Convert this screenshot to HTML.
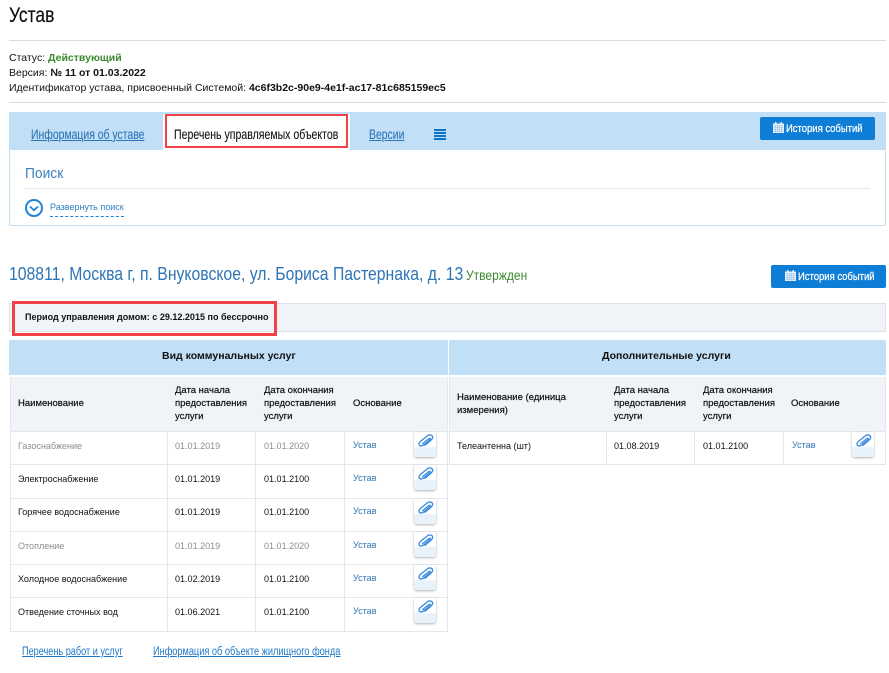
<!DOCTYPE html>
<html lang="ru">
<head>
<meta charset="utf-8">
<title>Устав</title>
<style>
html,body{margin:0;padding:0;background:#fff}
body{position:relative;width:889px;height:673px;overflow:hidden;font-family:"Liberation Sans",Arial,sans-serif;color:#111}
.a{position:absolute}
.t{position:absolute;white-space:nowrap;transform-origin:0 50%;line-height:14px;height:14px}
.b{position:absolute;background:#e3e7eb}
.s{font-size:9.5px;transform:scaleX(.95)}
.h{font-size:9.5px;color:#111;-webkit-text-stroke:.2px #111;line-height:13.2px;height:auto}
.g{color:#8c8c8c}
.l{color:#2f75b5}
.tab{font-size:14px;transform:scaleX(.745);-webkit-text-stroke:.1px currentColor}
.btn{position:absolute;width:115px;height:23px;background:#0d7dd6;border-radius:2px}
.clip{position:absolute;width:22px;height:25px;background:linear-gradient(#fff 58%,#e8f2fb 62%);border-radius:0 0 3px 3px;box-shadow:0 1px 2px rgba(0,0,0,.3)}
.clip svg{position:absolute;left:3px;top:1.500px}
</style>
</head>
<body>
<svg width="0" height="0" style="position:absolute"><defs>
<symbol id="pc" viewBox="0 0 17 14"><path d="M5.200 10 L11.800 4.600 C12.800 3.800 13.800 5 12.900 5.700 L7 10.800 C5 12.500 2 12.400 2 10 C2 8.900 2.700 8.100 3.500 7.400 L10.500 1.700 C12.500 .2 15.900 1 15.600 3.600 C15.500 4.800 14.600 5.700 13.600 6.500 L7.600 11.600" fill="none" stroke="#3a8ade" stroke-width="1.300"/></symbol>
<symbol id="cal" viewBox="0 0 11 11"><path fill="#eaf3fb" d="M0 1.500h2V0h1.500v1.500h4V0H9v1.500h2V11H0z"/><path stroke="#8dbfe8" stroke-width=".6" d="M.5 3.500h10M.5 5.500h10M.5 7.500h10M.5 9.500h10M2.500 3.500v7M4.500 3.500v7M6.500 3.500v7M8.500 3.500v7"/></symbol>
</defs></svg>

<div class="t" style="left:9px;top:5px;height:22px;line-height:22px;font-size:21px;color:#111;-webkit-text-stroke:.2px #111;transform:scaleX(.83)">Устав</div>
<div class="b" style="left:9px;top:40px;width:877px;height:1px;background:#d6dce2"></div>

<div class="t" style="left:9px;top:51px;font-size:10.5px">Статус: <b style="color:#3c8a2e">Действующий</b></div>
<div class="t" style="left:9px;top:66px;font-size:10.5px">Версия: <b>№ 11 от 01.03.2022</b></div>
<div class="t" style="left:9px;top:81px;font-size:10.5px">Идентификатор устава, присвоенный Системой: <b>4c6f3b2c-90e9-4e1f-ac17-81c685159ec5</b></div>
<div class="b" style="left:9px;top:102px;width:877px;height:1px;background:#d6dce2"></div>

<!-- Панель -->
<div class="a" style="left:9px;top:112px;width:875px;height:113px;border:1px solid #c1dff6;border-top:0;border-radius:0 0 2px 2px"></div>
<div class="a" style="left:9px;top:112px;width:877px;height:38px;background:#c1dff6"></div>
<div class="t tab" style="left:31px;top:127px;color:#2f75b5;text-decoration:underline">Информация об уставе</div>
<div class="a" style="left:163px;top:114px;width:187px;height:36px;background:#fff"></div>
<div class="a" style="left:165px;top:114px;width:179px;height:30px;background:#fff;border:2.500px solid #f04246"></div>
<div class="t tab" style="left:174px;top:127px;color:#111;transform:scaleX(.754)">Перечень управляемых объектов</div>
<div class="t tab" style="left:369px;top:127px;color:#2f75b5;text-decoration:underline">Версии</div>
<svg class="a" style="left:434px;top:129px" width="12" height="11"><path d="M0 1h12M0 4h12M0 7h12M0 10h12" stroke="#0d75c9" stroke-width="2"/></svg>

<div class="btn" style="left:760px;top:117px"></div>
<svg class="a" style="left:773px;top:122px" width="11" height="11"><use href="#cal"/></svg>
<div class="t" style="left:786px;top:122px;font-size:11px;color:#fff;-webkit-text-stroke:.25px #fff;transform:scaleX(.86)">История событий</div>

<div class="t" style="left:25px;top:166px;height:16px;line-height:16px;font-size:15px;color:#3b7fc0;transform:scaleX(.92)">Поиск</div>
<div class="b" style="left:25px;top:188px;width:845px;height:1px"></div>
<svg class="a" style="left:25px;top:199px" width="19" height="19"><circle cx="9" cy="9" r="8" fill="none" stroke="#1e83d8" stroke-width="2"/><path d="M5 7.500l4 3.800 4-3.800" fill="none" stroke="#1e83d8" stroke-width="1.800"/></svg>
<div class="t" style="left:50px;top:201px;font-size:9.500px;color:#2f7fc4;transform:scaleX(.95)">Развернуть поиск</div>
<div class="a" style="left:50px;top:216px;width:74px;border-top:1px dashed #1e83d8"></div>

<!-- Адрес -->
<div class="t" style="left:9px;top:263px;height:22px;line-height:22px;font-size:18px;color:#2f75b5;transform:scaleX(.876)">108811, Москва г, п. Внуковское, ул. Бориса Пастернака, д. 13</div>
<div class="t" style="left:466px;top:268px;font-size:14px;color:#3c8a2e;transform:scaleX(.86)">Утвержден</div>
<div class="btn" style="left:771px;top:265px"></div>
<svg class="a" style="left:785px;top:270px" width="11" height="11"><use href="#cal"/></svg>
<div class="t" style="left:798px;top:270px;font-size:11px;color:#fff;-webkit-text-stroke:.25px #fff;transform:scaleX(.86)">История событий</div>

<!-- Период -->
<div class="a" style="left:9px;top:303px;width:875px;height:27px;background:#f0f4f8;border:1px solid #dde2e7"></div>
<div class="a" style="left:12px;top:301px;width:259px;height:29px;border:3px solid #f04246"></div>
<div class="t" style="left:25px;top:311px;font-size:9.500px;font-weight:bold;transform:scaleX(.95)">Период управления домом: с 29.12.2015 по бессрочно</div>

<!-- Заголовки таблиц -->
<div class="a" style="left:9px;top:340px;width:439px;height:35px;background:#c1dff6;border-radius:2px 2px 0 0"></div>
<div class="a" style="left:449px;top:340px;width:437px;height:35px;background:#c1dff6;border-radius:2px 2px 0 0"></div>
<div class="t" style="left:162px;top:349px;font-size:10.500px;font-weight:bold">Вид коммунальных услуг</div>
<div class="t" style="left:602px;top:349px;font-size:10.500px;font-weight:bold">Дополнительные услуги</div>

<div class="a" style="left:10px;top:377px;width:438px;height:54px;background:#f0f4f8"></div>
<div class="a" style="left:449px;top:377px;width:436px;height:54px;background:#f0f4f8"></div>

<!-- Сетка слева -->
<div class="b" style="left:10px;top:377px;width:1px;height:255px"></div>
<div class="b" style="left:447px;top:377px;width:1px;height:255px"></div>
<div class="b" style="left:167px;top:431px;width:1px;height:200px"></div>
<div class="b" style="left:255px;top:431px;width:1px;height:200px"></div>
<div class="b" style="left:344px;top:431px;width:1px;height:200px"></div>
<div class="b" style="left:10px;top:431px;width:438px;height:1px"></div>
<div class="b" style="left:10px;top:464px;width:438px;height:1px"></div>
<div class="b" style="left:10px;top:498px;width:438px;height:1px"></div>
<div class="b" style="left:10px;top:531px;width:438px;height:1px"></div>
<div class="b" style="left:10px;top:564px;width:438px;height:1px"></div>
<div class="b" style="left:10px;top:597px;width:438px;height:1px"></div>
<div class="b" style="left:10px;top:631px;width:438px;height:1px"></div>

<!-- Сетка справа -->
<div class="b" style="left:449px;top:377px;width:1px;height:88px"></div>
<div class="b" style="left:885px;top:377px;width:1px;height:88px"></div>
<div class="b" style="left:606px;top:431px;width:1px;height:33px"></div>
<div class="b" style="left:694px;top:431px;width:1px;height:33px"></div>
<div class="b" style="left:783px;top:431px;width:1px;height:33px"></div>
<div class="b" style="left:449px;top:431px;width:437px;height:1px"></div>
<div class="b" style="left:449px;top:464px;width:437px;height:1px"></div>

<!-- Шапка слева -->
<div class="t h" style="left:18px;top:397px">Наименование</div>
<div class="t h" style="left:175px;top:384px">Дата начала<br>предоставления<br>услуги</div>
<div class="t h" style="left:264px;top:384px">Дата окончания<br>предоставления<br>услуги</div>
<div class="t h" style="left:353px;top:397px">Основание</div>

<!-- Шапка справа -->
<div class="t h" style="left:457px;top:391px">Наименование (единица<br>измерения)</div>
<div class="t h" style="left:614px;top:384px">Дата начала<br>предоставления<br>услуги</div>
<div class="t h" style="left:703px;top:384px">Дата окончания<br>предоставления<br>услуги</div>
<div class="t h" style="left:791px;top:397px">Основание</div>

<!-- Строки -->
<div class="t s g" style="left:18px;top:440px">Газоснабжение</div><div class="t s g" style="left:175px;top:440px">01.01.2019</div><div class="t s g" style="left:264px;top:440px">01.01.2020</div><div class="t s l" style="left:353px;top:439px">Устав</div>
<div class="t s" style="left:18px;top:473px">Электроснабжение</div><div class="t s" style="left:175px;top:473px">01.01.2019</div><div class="t s" style="left:264px;top:473px">01.01.2100</div><div class="t s l" style="left:353px;top:472px">Устав</div>
<div class="t s" style="left:18px;top:506px">Горячее водоснабжение</div><div class="t s" style="left:175px;top:506px">01.01.2019</div><div class="t s" style="left:264px;top:506px">01.01.2100</div><div class="t s l" style="left:353px;top:505px">Устав</div>
<div class="t s g" style="left:18px;top:540px">Отопление</div><div class="t s g" style="left:175px;top:540px">01.01.2019</div><div class="t s g" style="left:264px;top:540px">01.01.2020</div><div class="t s l" style="left:353px;top:539px">Устав</div>
<div class="t s" style="left:18px;top:573px">Холодное водоснабжение</div><div class="t s" style="left:175px;top:573px">01.02.2019</div><div class="t s" style="left:264px;top:573px">01.01.2100</div><div class="t s l" style="left:353px;top:572px">Устав</div>
<div class="t s" style="left:18px;top:606px">Отведение сточных вод</div><div class="t s" style="left:175px;top:606px">01.06.2021</div><div class="t s" style="left:264px;top:606px">01.01.2100</div><div class="t s l" style="left:353px;top:605px">Устав</div>

<div class="t s" style="left:457px;top:440px">Телеантенна (шт)</div><div class="t s" style="left:614px;top:440px">01.08.2019</div><div class="t s" style="left:703px;top:440px">01.01.2100</div><div class="t s l" style="left:792px;top:439px">Устав</div>

<!-- Скрепки -->
<div class="clip" style="left:414px;top:432px"><svg width="17" height="14"><use href="#pc"/></svg></div>
<div class="clip" style="left:414px;top:465px"><svg width="17" height="14"><use href="#pc"/></svg></div>
<div class="clip" style="left:414px;top:499px"><svg width="17" height="14"><use href="#pc"/></svg></div>
<div class="clip" style="left:414px;top:532px"><svg width="17" height="14"><use href="#pc"/></svg></div>
<div class="clip" style="left:414px;top:565px"><svg width="17" height="14"><use href="#pc"/></svg></div>
<div class="clip" style="left:414px;top:598px"><svg width="17" height="14"><use href="#pc"/></svg></div>
<div class="clip" style="left:852px;top:432px"><svg width="17" height="14"><use href="#pc"/></svg></div>

<!-- Ссылки -->
<div class="t" style="left:22px;top:645px;font-size:11.500px;color:#1f77c9;text-decoration:underline;transform:scaleX(.795)">Перечень работ и услуг</div>
<div class="t" style="left:153px;top:645px;font-size:11.500px;color:#1f77c9;text-decoration:underline;transform:scaleX(.8)">Информация об объекте жилищного фонда</div>
</body>
</html>
